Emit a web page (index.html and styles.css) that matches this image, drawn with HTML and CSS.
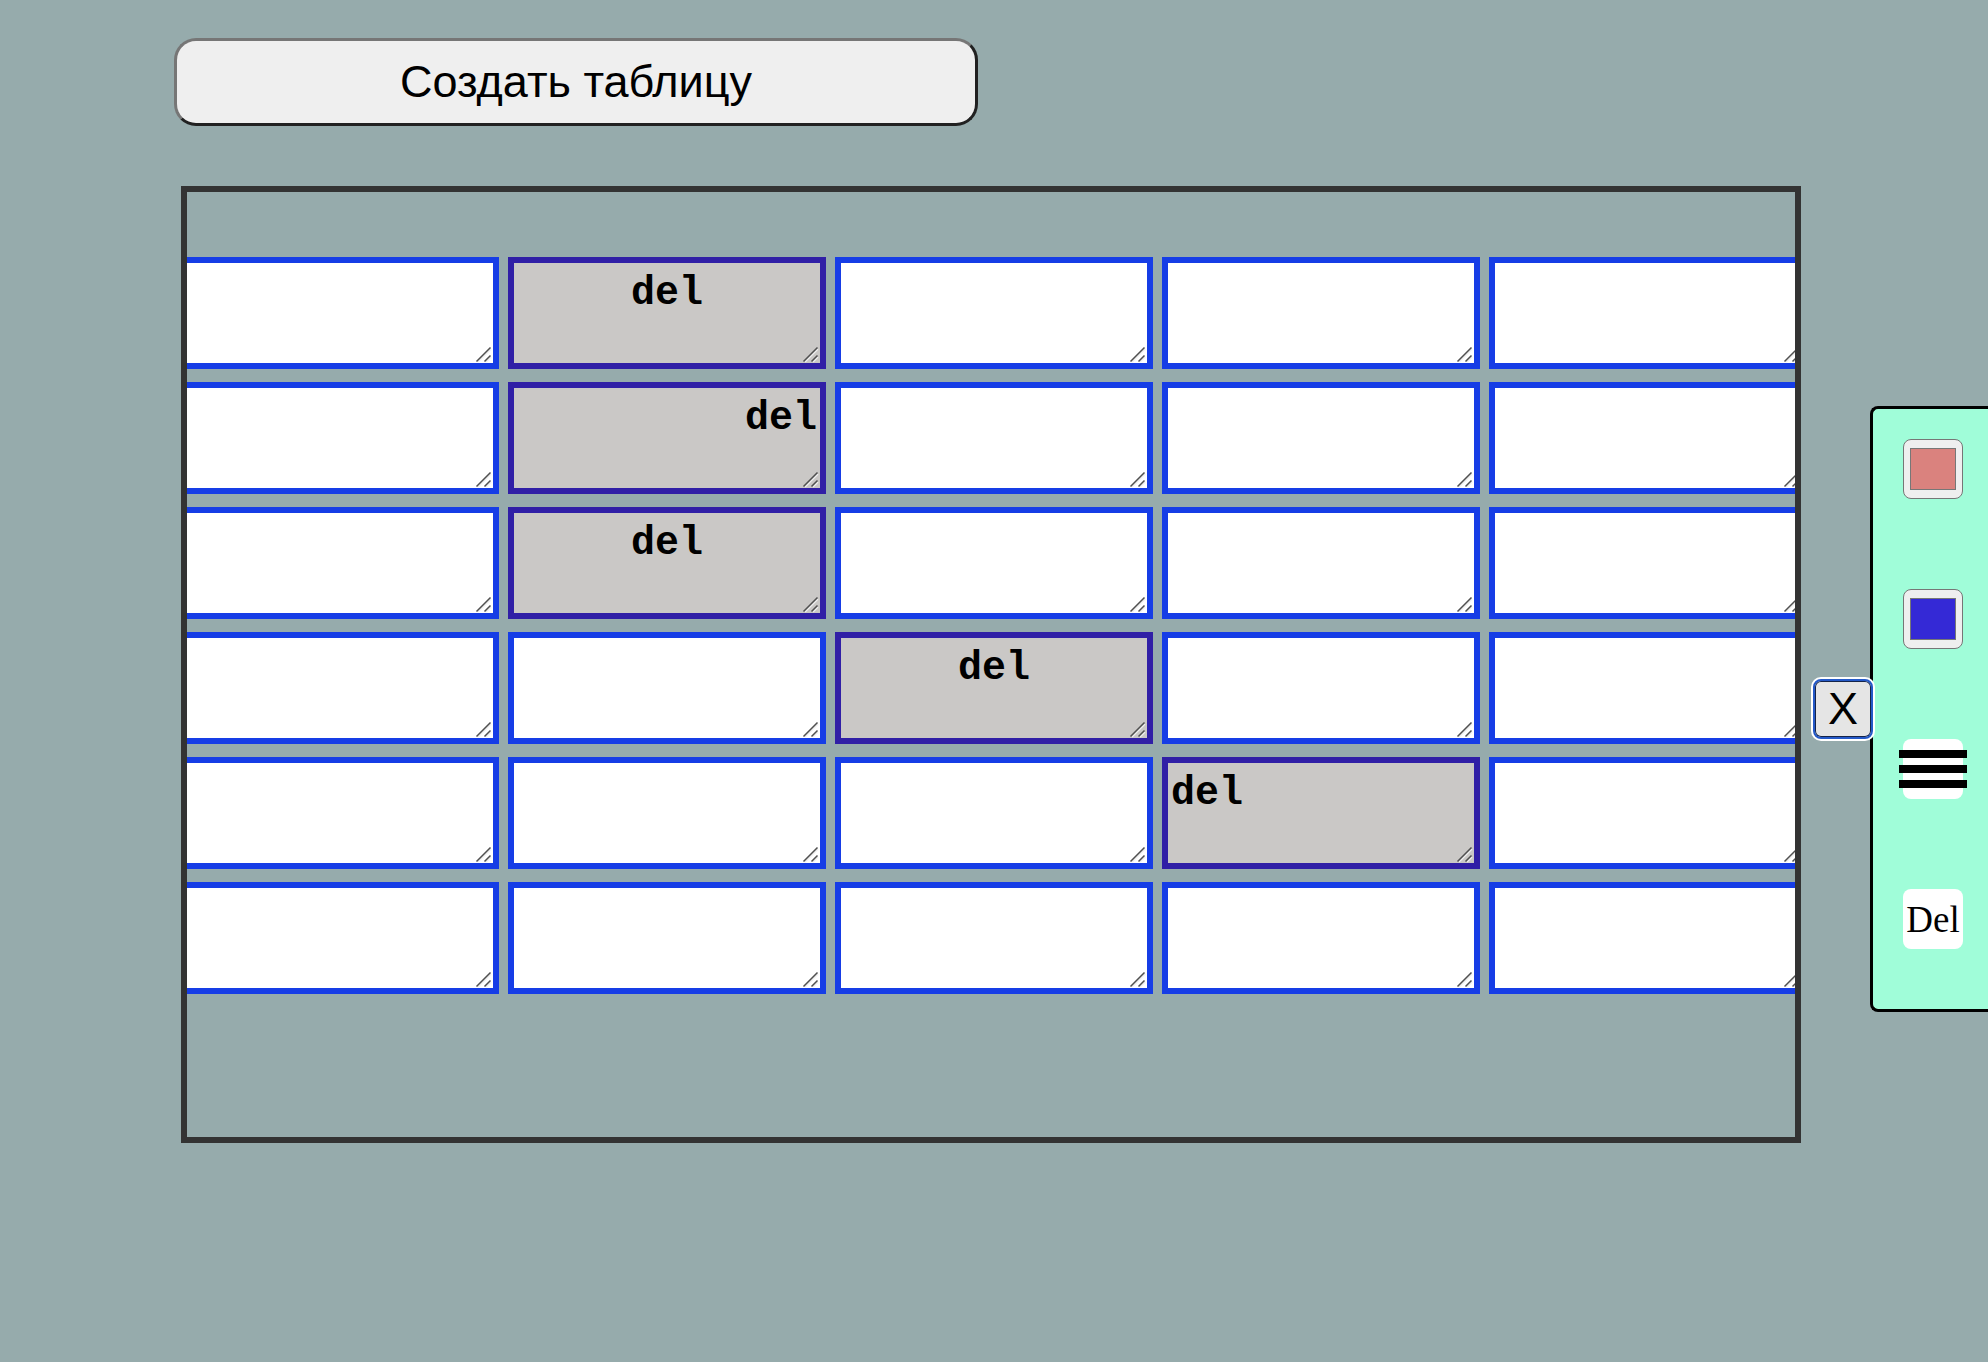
FILE: index.html
```
<!DOCTYPE html>
<html lang="ru">
<head>
<meta charset="utf-8">
<meta name="viewport" content="width=device-width, initial-scale=1">
<title>Таблица</title>
<link rel="stylesheet" href="styles.css">
</head>
<body>
<div class="layout">
  <main class="workspace">
    <button type="button" class="create">Создать таблицу</button>
    <div class="frame">
      <table class="sheet">
        <tbody>
          <tr>
            <td><textarea class="cell" aria-label="1:1"></textarea></td>
            <td><textarea class="cell cell-marked align-center" aria-label="1:2">del</textarea></td>
            <td><textarea class="cell" aria-label="1:3"></textarea></td>
            <td><textarea class="cell" aria-label="1:4"></textarea></td>
            <td><textarea class="cell" aria-label="1:5"></textarea></td>
          </tr>
          <tr>
            <td><textarea class="cell" aria-label="2:1"></textarea></td>
            <td><textarea class="cell cell-marked align-right" aria-label="2:2">del</textarea></td>
            <td><textarea class="cell" aria-label="2:3"></textarea></td>
            <td><textarea class="cell" aria-label="2:4"></textarea></td>
            <td><textarea class="cell" aria-label="2:5"></textarea></td>
          </tr>
          <tr>
            <td><textarea class="cell" aria-label="3:1"></textarea></td>
            <td><textarea class="cell cell-marked align-center" aria-label="3:2">del</textarea></td>
            <td><textarea class="cell" aria-label="3:3"></textarea></td>
            <td><textarea class="cell" aria-label="3:4"></textarea></td>
            <td><textarea class="cell" aria-label="3:5"></textarea></td>
          </tr>
          <tr>
            <td><textarea class="cell" aria-label="4:1"></textarea></td>
            <td><textarea class="cell" aria-label="4:2"></textarea></td>
            <td><textarea class="cell cell-marked align-center" aria-label="4:3">del</textarea></td>
            <td><textarea class="cell" aria-label="4:4"></textarea></td>
            <td><textarea class="cell" aria-label="4:5"></textarea></td>
          </tr>
          <tr>
            <td><textarea class="cell" aria-label="5:1"></textarea></td>
            <td><textarea class="cell" aria-label="5:2"></textarea></td>
            <td><textarea class="cell" aria-label="5:3"></textarea></td>
            <td><textarea class="cell cell-marked" aria-label="5:4">del</textarea></td>
            <td><textarea class="cell" aria-label="5:5"></textarea></td>
          </tr>
          <tr>
            <td><textarea class="cell" aria-label="6:1"></textarea></td>
            <td><textarea class="cell" aria-label="6:2"></textarea></td>
            <td><textarea class="cell" aria-label="6:3"></textarea></td>
            <td><textarea class="cell" aria-label="6:4"></textarea></td>
            <td><textarea class="cell" aria-label="6:5"></textarea></td>
          </tr>
        </tbody>
      </table>
    </div>
  </main>
  <aside class="tools">
    <button type="button" class="close">X</button>
    <div class="panel">
      <input type="color" class="swatch" value="#da827e" aria-label="Цвет фона">
      <input type="color" class="swatch" value="#3429d6" aria-label="Цвет рамки">
      <button type="button" class="tool" aria-label="Выравнивание">
        <svg class="bars" viewBox="0 0 68 38" aria-hidden="true"><path d="M0 0h68v8H0zM0 15h68v8H0zM0 30h68v8H0z"/></svg>
      </button>
      <button type="button" class="tool">Del</button>
    </div>
  </aside>
</div>
</body>
</html>
```
FILE: styles.css
```
* {
  box-sizing: border-box;
}

body {
  margin: 0;
  background: #96abac;
  color: #000;
}

.layout {
  display: flex;
  align-items: flex-start;
}

.workspace {
  flex: 1;
  min-width: 0;
  padding: 38px 12px 60px 174px;
}

.create {
  display: block;
  width: 804px;
  max-width: 100%;
  height: 88px;
  padding: 0;
  border: 3px solid;
  border-color: #767676 #212121 #212121 #767676;
  border-radius: 22px;
  background: #efefef;
  color: #000;
  font: 45px "Liberation Sans", Arial, sans-serif;
}

.frame {
  margin: 60px 0 0 7px;
  padding: 52px 0 130px;
  border: 6px solid #333;
  overflow: hidden;
}

/* The sheet is wider than its frame, which cuts off both sides. */
.sheet {
  width: calc(100% + 36px);
  margin-left: -15px;
  border-spacing: 9px 13px;
  table-layout: fixed;
}

.sheet td {
  padding: 0;
}

/* The resize grip is a background, so that it can be larger than the native one. */
.cell {
  display: block;
  width: 100%;
  height: 112px;
  padding: 3px;
  border: 6px solid #163de6;
  border-radius: 0;
  background: #fff url("data:image/svg+xml,%3Csvg xmlns='http://www.w3.org/2000/svg' width='18' height='18' fill='none' stroke-width='1.5'%3E%3Cpath stroke='%23eee' d='M3 17L16 4M11 17l5-5'/%3E%3Cpath stroke='%23505050' d='M1.500 16.500l14-14M9.500 16.500l6-6'/%3E%3C/svg%3E") no-repeat right bottom;
  color: #000;
  font: bold 40px/55px "Liberation Mono", "Courier New", monospace;
  resize: both;
}

.cell::-webkit-resizer {
  background: transparent;
}

.cell-marked {
  border-color: #301fa6;
  background-color: #cac8c6;
}

.align-center {
  text-align: center;
}

.align-right {
  text-align: right;
}

.tools {
  display: flex;
  align-items: center;
  margin-top: 406px;
}

.close {
  position: relative;
  z-index: 1;
  width: 60px;
  height: 60px;
  padding: 0;
  border: 2px solid #2459c8;
  border-radius: 8px;
  background: #e5e5e5;
  box-shadow: 0 0 0 2px #fff, inset 0 0 0 1px #14244a;
  color: #000;
  font: 45px "Liberation Sans", Arial, sans-serif;
}

.panel {
  display: flex;
  flex-direction: column;
  gap: 90px;
  margin-left: -3px;
  padding: 30px 25px 60px 30px;
  border: 3px solid #000;
  border-right: 0;
  border-radius: 8px 0 0 8px;
  background: #a0fdd9;
}

.swatch {
  width: 60px;
  height: 60px;
  padding: 8px 6px;
  border: 1px solid #767676;
  border-radius: 8px;
  background: #efefef;
}

.swatch::-webkit-color-swatch-wrapper {
  padding: 0;
}

.swatch::-webkit-color-swatch {
  border: 1px solid #777;
}

.tool {
  display: flex;
  align-items: center;
  justify-content: center;
  width: 60px;
  height: 60px;
  padding: 0;
  border: 0;
  border-radius: 8px;
  background: #fff;
  color: #000;
  font: 37px "Liberation Serif", "Times New Roman", serif;
}

.bars {
  flex: none;
  width: 68px;
  height: 38px;
}
```
